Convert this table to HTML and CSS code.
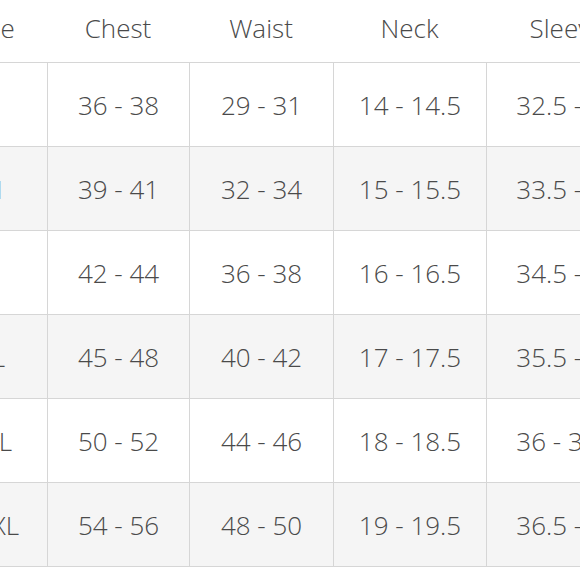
FILE: index.html
```html
<!DOCTYPE html>
<html>
<head>
<meta charset="utf-8">
<link rel="stylesheet" href="styles.css">
</head>
<body>
<div class="chart">
  <div class="row head">
    <div class="cell size">Size</div>
    <div class="cell">Chest</div>
    <div class="cell">Waist</div>
    <div class="cell">Neck</div>
    <div class="cell">Sleeve</div>
  </div>
  <div class="row">
    <div class="cell size">S</div>
    <div class="cell">36 - 38</div>
    <div class="cell">29 - 31</div>
    <div class="cell">14 - 14.5</div>
    <div class="cell">32.5 - 33</div>
  </div>
  <div class="row alt">
    <div class="cell size">M</div>
    <div class="cell">39 - 41</div>
    <div class="cell">32 - 34</div>
    <div class="cell">15 - 15.5</div>
    <div class="cell">33.5 - 34</div>
  </div>
  <div class="row">
    <div class="cell size">L</div>
    <div class="cell">42 - 44</div>
    <div class="cell">36 - 38</div>
    <div class="cell">16 - 16.5</div>
    <div class="cell">34.5 - 35</div>
  </div>
  <div class="row alt">
    <div class="cell size">XL</div>
    <div class="cell">45 - 48</div>
    <div class="cell">40 - 42</div>
    <div class="cell">17 - 17.5</div>
    <div class="cell">35.5 - 36</div>
  </div>
  <div class="row">
    <div class="cell size">XXL</div>
    <div class="cell">50 - 52</div>
    <div class="cell">44 - 46</div>
    <div class="cell">18 - 18.5</div>
    <div class="cell">36 - 36.5</div>
  </div>
  <div class="row alt last">
    <div class="cell size">XXXL</div>
    <div class="cell">54 - 56</div>
    <div class="cell">48 - 50</div>
    <div class="cell">19 - 19.5</div>
    <div class="cell">36.5 - 37</div>
  </div>
</div>
</body>
</html>
```
FILE: styles.css
```css
html, body {
  margin: 0;
  padding: 0;
  background: #fff;
  overflow: hidden;
}
body {
  width: 580px;
  height: 580px;
}
.chart {
  margin-left: -64px;
  width: 712px;
  font-family: "Open Sans", sans-serif;
  font-weight: 300;
  font-size: 26px;
  color: #4a4a4a;
}
.row {
  display: grid;
  grid-template-columns: 111px 142px 144px 153px 162px;
  height: 83px;
  border-top: 1px solid #d6d6d6;
}
.row.alt {
  background: #f5f5f5;
}
.row.last {
  border-bottom: 1px solid #d6d6d6;
}
.row.head {
  height: 62px;
  border-top: none;
}
.cell {
  display: flex;
  align-items: center;
  justify-content: center;
  white-space: nowrap;
  border-left: 1px solid #d6d6d6;
}
.cell.size {
  border-left: none;
}
.head .cell {
  border-left: none;
  padding-bottom: 7px;
}
```
